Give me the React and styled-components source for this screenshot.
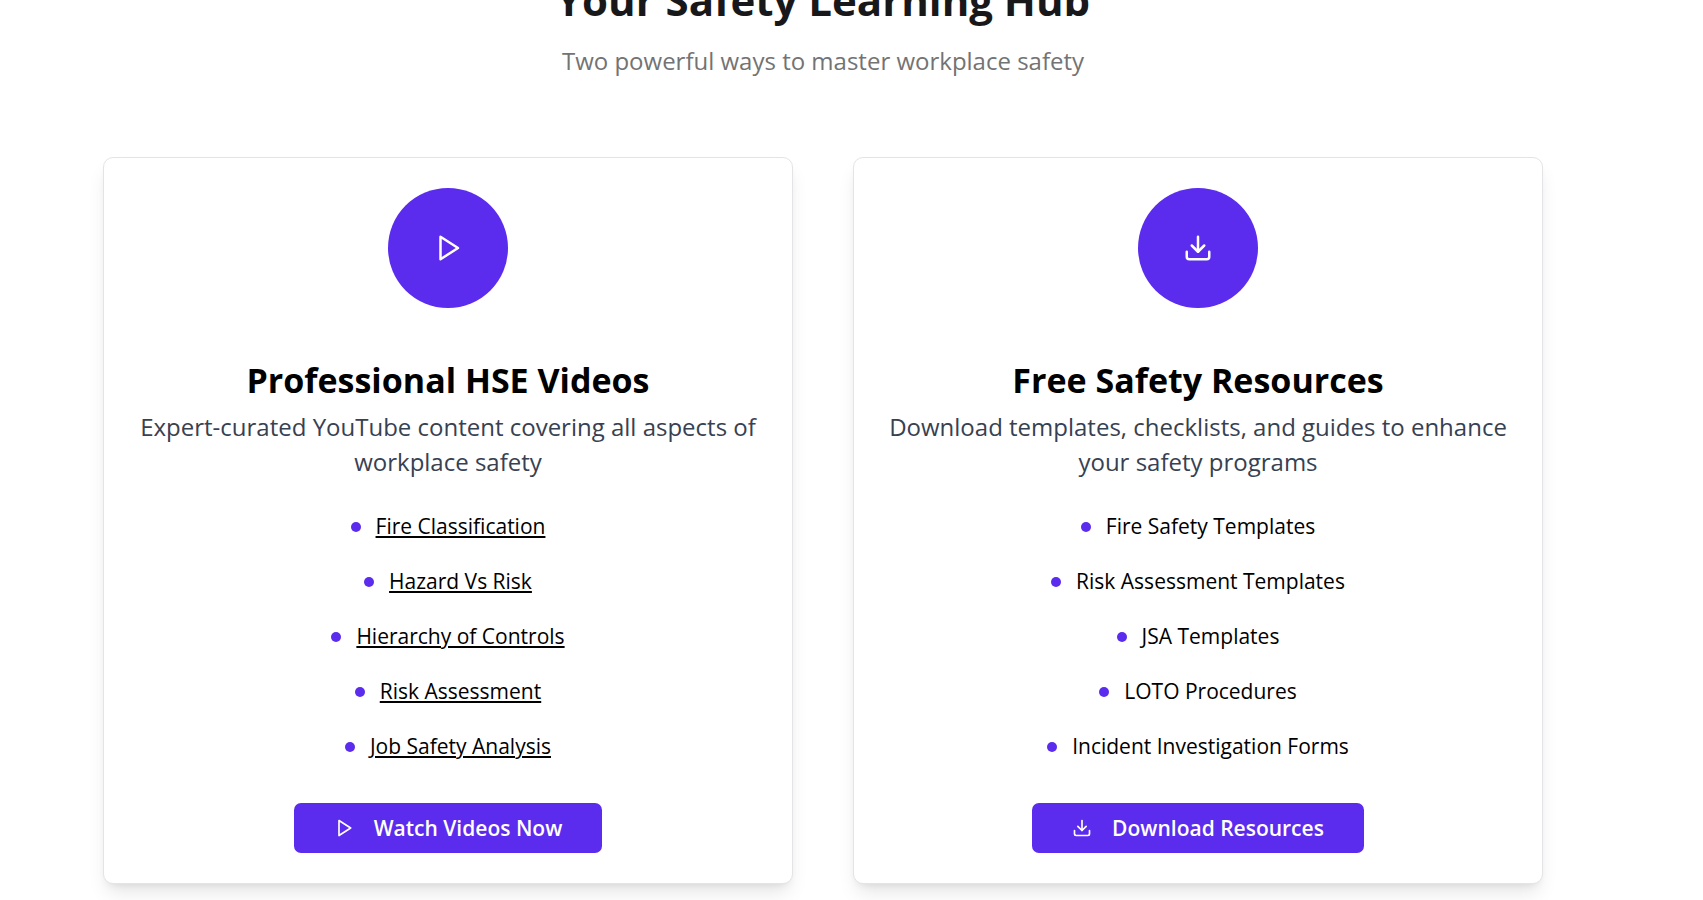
import React from 'react';
import styled, { createGlobalStyle } from 'styled-components';

const GlobalStyle = createGlobalStyle`
  *, *::before, *::after { box-sizing: border-box; }
  body {
    margin: 0;
    background: #fff;
    color: #000;
    font-family: "Segoe UI", "Open Sans", "Noto Sans", sans-serif;
  }
  h2, h3, p, ul { margin: 0; padding: 0; }
`;

const Page = styled.main`
  display: flow-root;
  overflow: hidden;
  padding: 0 57px 40px 0;
`;

const Section = styled.section`
  max-width: 1440px;
  margin: -25px auto 0;
`;

const Header = styled.header`
  display: flex;
  flex-direction: column;
  align-items: center;
  gap: 18px;
  margin-bottom: 79px;
  text-align: center;
`;

const Heading = styled.h2`
  color: #18181b;
  font-size: 42px;
  font-weight: 700;
  line-height: 50px;
`;

const Subtitle = styled.p`
  color: #737373;
  font-size: 24px;
  line-height: 35px;
`;

const Cards = styled.div`
  display: grid;
  grid-template-columns: repeat(auto-fit, minmax(min(100%, 480px), 1fr));
  gap: 60px;
`;

const CardBox = styled.article`
  display: flex;
  flex-direction: column;
  align-items: center;
  padding: 30px;
  border: 1px solid #e4e4e7;
  border-radius: 10px;
  background: #fff;
  box-shadow: 0 12px 19px -4px rgba(0, 0, 0, 0.1), 0 5px 8px -5px rgba(0, 0, 0, 0.1);
  text-align: center;
`;

const IconCircle = styled.div`
  display: grid;
  place-items: center;
  width: 120px;
  height: 120px;
  margin-bottom: 52px;
  border-radius: 50%;
  background: #5b2bee;
  color: #fff;
`;

const CardTitle = styled.h3`
  margin-bottom: 9px;
  font-size: 34px;
  font-weight: 700;
  line-height: 40px;
`;

const Description = styled.p`
  margin-bottom: 30px;
  color: #374151;
  font-size: 24px;
  line-height: 35px;
`;

const TopicList = styled.ul`
  display: flex;
  flex-direction: column;
  gap: 20px;
  margin-bottom: 39px;
  list-style: none;
`;

const Topic = styled.li`
  display: flex;
  align-items: center;
  justify-content: center;
  gap: 15px;
  font-size: 21px;
  line-height: 35px;

  &::before {
    content: "";
    flex: none;
    width: 10px;
    height: 10px;
    border-radius: 50%;
    background: #5b2bee;
  }
`;

const TopicLink = styled.a`
  color: inherit;
  text-decoration: underline;
  text-decoration-thickness: 2px;
  text-underline-offset: 2px;
`;

const ActionButton = styled.button`
  display: inline-flex;
  align-items: center;
  justify-content: center;
  gap: 20px;
  height: 50px;
  padding: 0 40px;
  border: 0;
  border-radius: 7px;
  background: #5b2bee;
  color: #fff;
  font: inherit;
  font-size: 21px;
  font-weight: 600;
  line-height: 30px;
  cursor: pointer;
`;

const PlayIcon = ({ size }) => (
  <svg
    width={size}
    height={size}
    viewBox="0 0 24 24"
    fill="none"
    stroke="currentColor"
    strokeWidth="2"
    strokeLinecap="round"
    strokeLinejoin="round"
    aria-hidden="true"
  >
    <polygon points="6 3 20 12 6 21 6 3" />
  </svg>
);

const DownloadIcon = ({ size }) => (
  <svg
    width={size}
    height={size}
    viewBox="0 0 24 24"
    fill="none"
    stroke="currentColor"
    strokeWidth="2"
    strokeLinecap="round"
    strokeLinejoin="round"
    aria-hidden="true"
  >
    <path d="M21 15v4a2 2 0 0 1-2 2H5a2 2 0 0 1-2-2v-4" />
    <polyline points="7 10 12 15 17 10" />
    <line x1="12" x2="12" y1="15" y2="3" />
  </svg>
);

const cards = [
  {
    title: 'Professional HSE Videos',
    description: 'Expert-curated YouTube content covering all aspects of workplace safety',
    icon: PlayIcon,
    linked: true,
    topics: [
      'Fire Classification',
      'Hazard Vs Risk',
      'Hierarchy of Controls',
      'Risk Assessment',
      'Job Safety Analysis',
    ],
    action: 'Watch Videos Now',
  },
  {
    title: 'Free Safety Resources',
    description: 'Download templates, checklists, and guides to enhance your safety programs',
    icon: DownloadIcon,
    linked: false,
    topics: [
      'Fire Safety Templates',
      'Risk Assessment Templates',
      'JSA Templates',
      'LOTO Procedures',
      'Incident Investigation Forms',
    ],
    action: 'Download Resources',
  },
];

function Card({ title, description, icon: Icon, linked, topics, action }) {
  return (
    <CardBox>
      <IconCircle>
        <Icon size={30} />
      </IconCircle>
      <CardTitle>{title}</CardTitle>
      <Description>{description}</Description>
      <TopicList>
        {topics.map((topic) => (
          <Topic key={topic}>
            {linked ? <TopicLink href="#videos">{topic}</TopicLink> : <span>{topic}</span>}
          </Topic>
        ))}
      </TopicList>
      <ActionButton type="button">
        <Icon size={20} />
        {action}
      </ActionButton>
    </CardBox>
  );
}

export default function App() {
  return (
    <>
      <GlobalStyle />
      <Page>
        <Section>
          <Header>
            <Heading>Your Safety Learning Hub</Heading>
            <Subtitle>Two powerful ways to master workplace safety</Subtitle>
          </Header>
          <Cards>
            {cards.map((card) => (
              <Card key={card.title} {...card} />
            ))}
          </Cards>
        </Section>
      </Page>
    </>
  );
}
